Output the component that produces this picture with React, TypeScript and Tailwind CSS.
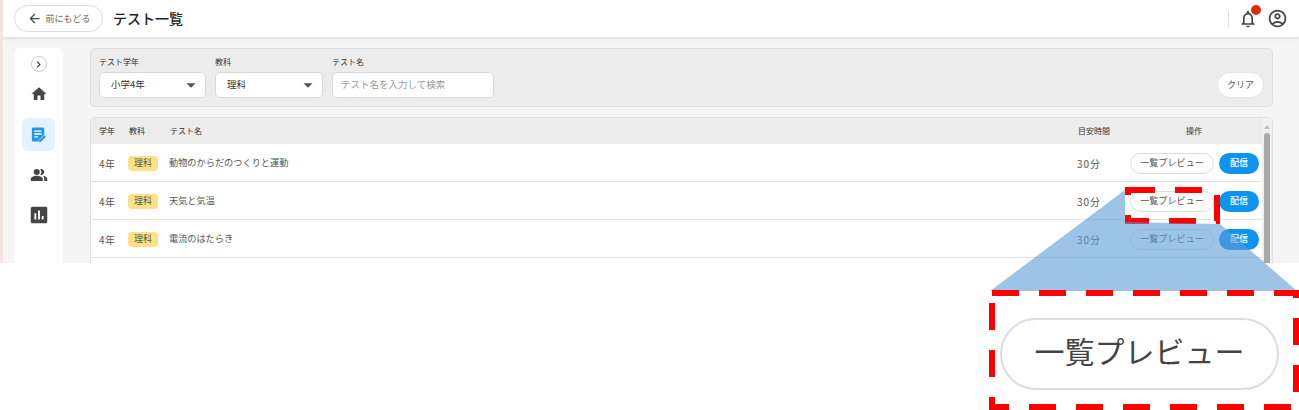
import React from 'react';
import {
    MdArrowBack,
    MdArrowDropDown,
    MdAssessment,
    MdChevronRight,
    MdHome,
    MdOutlineAccountCircle,
    MdOutlineNotifications,
    MdPeopleAlt,
} from 'react-icons/md';

const rows = [
    { grade: '4年', subject: '理科', name: '動物のからだのつくりと運動', time: '30分' },
    { grade: '4年', subject: '理科', name: '天気と気温', time: '30分' },
    { grade: '4年', subject: '理科', name: '電流のはたらき', time: '30分' },
];

const NoteIcon = () => (
    <svg width="17" height="17" viewBox="0 0 18 18">
        <path
            fill="#1e96f0"
            d="M3.5 1.5h10a1.5 1.5 0 0 1 1.5 1.5v6.2l-5.6 5.6-.4 1.7H3.5A1.5 1.5 0 0 1 2 15V3a1.5 1.5 0 0 1 1.5-1.5z"
        />
        <path stroke="#fff" strokeWidth="1.4" d="M4.5 5.5h8M4.5 8.5h8M4.5 11.5h4" />
        <path fill="#1e96f0" d="M15.2 9.8l1.7 1.7-5.3 5.3-2.1.4.4-2.1z" />
    </svg>
);

const Select = ({ label, value, width }: { label: string; value: string; width: string }) => (
    <div className={width}>
        <p className="text-[8px] leading-[10px] text-[#333] mb-[5px]">{label}</p>
        <div className="h-[26px] bg-white border border-[#d8d8d8] rounded-[5px] flex items-center justify-between pl-[11px] pr-[3px]">
            <span className="text-[9.5px] text-[#333] mb-[2px]">{value}</span>
            <MdArrowDropDown size={22} className="text-[#555]" />
        </div>
    </div>
);

const App: React.FC = () => {
    return (
        <div
            className="relative w-[1299px] h-[410px] bg-white overflow-hidden"
            style={{ fontFamily: '"Noto Sans CJK JP", "Noto Sans", sans-serif' }}
        >
            <div className="h-[263px] bg-[#f5f5f5] border-l-[3px] border-[#f3e3e1] overflow-hidden flex flex-col">
                {/* Header */}
                <header className="h-[37px] shrink-0 bg-white shadow-[0_1px_3px_rgba(0,0,0,0.15)] flex items-center pl-[11px] pr-[11px]">
                    <button className="w-[89px] h-[27px] rounded-full border border-[#dcdcdc] bg-white flex items-center justify-center gap-[4px]">
                        <MdArrowBack size={15} className="text-[#444]" />
                        <span className="text-[9px] text-[#666]">前にもどる</span>
                    </button>
                    <h1 className="ml-[10px] text-[14px] font-medium text-[#222]">テスト一覧</h1>
                    <div className="ml-auto flex items-center">
                        <div className="w-px h-[16px] bg-[#ddd] mr-[9px]" />
                        <div className="relative mr-[9px]">
                            <MdOutlineNotifications size={20} className="text-[#444]" />
                            <span className="absolute right-[-3px] top-[-4px] w-[10px] h-[10px] rounded-full bg-[#e02a0a]" />
                        </div>
                        <MdOutlineAccountCircle size={21} className="text-[#444]" />
                    </div>
                </header>

                <div className="flex-1 flex items-start pt-[11px] pl-[11px]">
                    {/* Sidebar */}
                    <aside className="w-[49px] h-[240px] shrink-0 bg-white rounded-[5px] flex flex-col items-center pt-[8px]">
                        <div className="w-[16px] h-[16px] rounded-full border border-[#ccc] flex items-center justify-center">
                            <MdChevronRight size={13} className="text-[#333]" />
                        </div>
                        <div className="mt-[13px] h-[18px] flex items-center">
                            <MdHome size={18} className="text-[#444]" />
                        </div>
                        <div className="mt-[15px] w-[33px] h-[33px] rounded-[6px] bg-[#e3f2fd] flex items-center justify-center">
                            <NoteIcon />
                        </div>
                        <div className="mt-[15px] h-[18px] flex items-center">
                            <MdPeopleAlt size={18} className="text-[#444]" />
                        </div>
                        <div className="mt-[22px] h-[18px] flex items-center">
                            <MdAssessment size={22} className="text-[#444]" />
                        </div>
                    </aside>

                    <main className="ml-[27px] w-[1183px] shrink-0">
                        {/* Filters */}
                        <section className="h-[59px] bg-[#ececec] border border-[#dedede] rounded-[5px] flex pl-[8px] pr-[8px] pt-[8px] gap-[9px]">
                            <Select label="テスト学年" value="小学4年" width="w-[107px]" />
                            <Select label="教科" value="理科" width="w-[108px]" />
                            <div className="w-[162px]">
                                <p className="text-[8px] leading-[10px] text-[#333] mb-[5px]">テスト名</p>
                                <div className="h-[26px] bg-white border border-[#d8d8d8] rounded-[5px] flex items-center pl-[8px]">
                                    <span className="text-[9.5px] text-[#999] mb-[2px]">テスト名を入力して検索</span>
                                </div>
                            </div>
                            <button className="ml-auto mt-[15px] w-[47px] h-[26px] rounded-full bg-white border border-[#e4e4e4] text-[9px] text-[#555]">
                                クリア
                            </button>
                        </section>

                        {/* Table */}
                        <section className="mt-[10px] h-[200px] relative bg-white border border-[#dedede] rounded-[5px] overflow-hidden">
                            <div className="h-[26px] bg-[#ececec] flex items-center pl-[8px] text-[8px] text-[#333]">
                                <span className="w-[30px]">学年</span>
                                <span className="w-[41px]">教科</span>
                                <span className="w-[908px]">テスト名</span>
                                <span className="w-[70px]">目安時間</span>
                                <span className="w-[92px] text-center">操作</span>
                            </div>
                            {rows.map((row, index) => (
                                <div key={index} className="h-[38px] pt-[1px] border-b border-[#e2e2e2] flex items-center pl-[8px] text-[9px] text-[#555]">
                                    <span className="w-[29px] text-[10px] tracking-[0.5px]">{row.grade}</span>
                                    <span className="w-[41px]">
                                        <span className="inline-flex w-[30px] h-[15px] items-center justify-center rounded-[4px] bg-[#ffe082] text-[#555]">
                                            {row.subject}
                                        </span>
                                    </span>
                                    <span className="w-[908px] text-[9.2px]">{row.name}</span>
                                    <span className="w-[53px] text-[10px] tracking-[1px]">{row.time}</span>
                                    <button className="w-[84px] h-[21px] rounded-full border border-[#dcdcdc] bg-white text-[9.1px] text-[#555]">
                                        一覧プレビュー
                                    </button>
                                    <button className="ml-[5px] w-[40px] h-[21px] rounded-full bg-[#0f94ee] text-[9px] font-medium text-white">
                                        配信
                                    </button>
                                </div>
                            ))}
                            {/* Scrollbar */}
                            <div className="absolute right-0 top-0 bottom-0 w-[10px] bg-[#f0f0f0] flex flex-col items-center">
                                <span className="mt-[7px] w-0 h-0 border-x-[3px] border-x-transparent border-b-[4px] border-b-[#bbb]" />
                                <span className="mt-[4px] w-[6px] h-[140px] rounded-[3px] bg-[#a8a8a8]" />
                            </div>
                        </section>
                    </main>
                </div>
            </div>

            {/* Callout annotation */}
            <svg className="absolute inset-0" width="1299" height="410" viewBox="0 0 1299 410">
                <rect x="1128" y="190" width="89" height="31" fill="none" stroke="#ff0000" strokeWidth="6" strokeDasharray="27 20" />
                <polygon points="1125,190 1125,222 1220,224 1297,291 990,291" fill="#5b9bd5" fillOpacity="0.6" />
                <rect x="992" y="293" width="304" height="114" fill="none" stroke="#ff0000" strokeWidth="6" strokeDasharray="27 20" />
            </svg>
            <div className="absolute left-[1000px] top-[318px] w-[279px] h-[72px] pb-[8px] rounded-full border-2 border-[#dcdcdc] bg-white flex items-center justify-center text-[30px] text-[#444]">
                一覧プレビュー
            </div>
        </div>
    );
};

export default App;
